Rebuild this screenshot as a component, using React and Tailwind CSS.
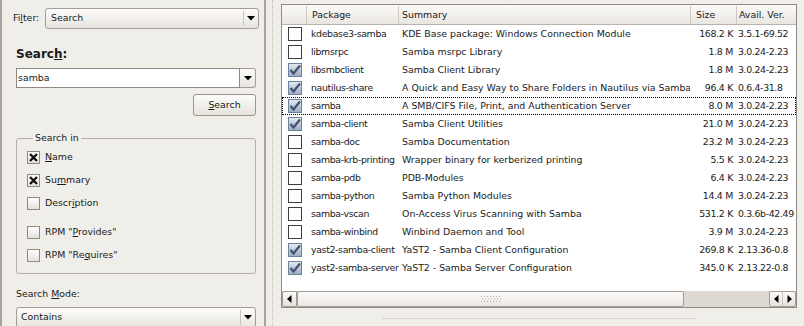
import React from "react";

const packages = [
  { name: "kdebase3-samba", summary: "KDE Base package: Windows Connection Module", size: "168.2 K", ver: "3.5.1-69.52", on: false },
  { name: "libmsrpc", summary: "Samba msrpc Library", size: "1.8 M", ver: "3.0.24-2.23", on: false },
  { name: "libsmbclient", summary: "Samba Client Library", size: "1.8 M", ver: "3.0.24-2.23", on: true },
  { name: "nautilus-share", summary: "A Quick and Easy Way to Share Folders in Nautilus via Samba", size: "96.4 K", ver: "0.6.4-31.8", on: true },
  { name: "samba", summary: "A SMB/CIFS File, Print, and Authentication Server", size: "8.0 M", ver: "3.0.24-2.23", on: true, focus: true },
  { name: "samba-client", summary: "Samba Client Utilities", size: "21.0 M", ver: "3.0.24-2.23", on: true },
  { name: "samba-doc", summary: "Samba Documentation", size: "23.2 M", ver: "3.0.24-2.23", on: false },
  { name: "samba-krb-printing", summary: "Wrapper binary for kerberized printing", size: "5.5 K", ver: "3.0.24-2.23", on: false },
  { name: "samba-pdb", summary: "PDB-Modules", size: "6.4 K", ver: "3.0.24-2.23", on: false },
  { name: "samba-python", summary: "Samba Python Modules", size: "14.4 M", ver: "3.0.24-2.23", on: false },
  { name: "samba-vscan", summary: "On-Access Virus Scanning with Samba", size: "531.2 K", ver: "0.3.6b-42.49", on: false },
  { name: "samba-winbind", summary: "Winbind Daemon and Tool", size: "3.9 M", ver: "3.0.24-2.23", on: false },
  { name: "yast2-samba-client", summary: "YaST2 - Samba Client Configuration", size: "269.8 K", ver: "2.13.36-0.8", on: true },
  { name: "yast2-samba-server", summary: "YaST2 - Samba Server Configuration", size: "345.0 K", ver: "2.13.22-0.8", on: true },
];

const DownArrow = () => (
  <svg width="8" height="5" viewBox="0 0 8 5">
    <polygon points="0,0 8,0 4,4.5" fill="#000" />
  </svg>
);

const LeftArrow = () => (
  <svg width="5" height="8" viewBox="0 0 5 8">
    <polygon points="4.5,0 4.5,8 0,4" fill="#000" />
  </svg>
);

const RightArrow = () => (
  <svg width="5" height="8" viewBox="0 0 5 8">
    <polygon points="0.5,0 0.5,8 5,4" fill="#000" />
  </svg>
);

const Combo = ({ text, pad = "pl-[5px]" }) => (
  <div className="h-[21px] flex border border-[#a29e97] rounded-[3px] bg-gradient-to-b from-[#fdfcfb] to-[#e8e5df]">
    <div className={`flex-1 flex items-center ${pad}`}>{text}</div>
    <div className="w-[15px] my-[2px] border-l border-[#c9c5be] flex items-center justify-center">
      <DownArrow />
    </div>
  </div>
);

const XBox = ({ checked }) => (
  <div className="w-[13px] h-[13px] border border-[#8e8a84] bg-gradient-to-b from-[#ffffff] to-[#e4e1dc] flex items-center justify-center">
    {checked && (
      <svg width="9" height="9" viewBox="0 0 9 9">
        <path d="M1 1 L8 8 M8 1 L1 8" stroke="#111" strokeWidth="2.3" />
      </svg>
    )}
  </div>
);

const CheckOption = ({ children, checked, extra = "" }) => (
  <div className={`h-[23px] flex items-center gap-[5px] ${extra}`}>
    <XBox checked={checked} />
    <span>{children}</span>
  </div>
);

const PkgBox = ({ on }) =>
  on ? (
    <svg width="14" height="14" viewBox="0 0 14 14">
      <defs>
        <linearGradient id="pk" x1="0" y1="0" x2="0" y2="1">
          <stop offset="0" stopColor="#e6ebf2" />
          <stop offset="1" stopColor="#9aabc2" />
        </linearGradient>
      </defs>
      <rect x="0.5" y="0.5" width="13" height="13" fill="url(#pk)" stroke="#6f819a" />
      <path d="M2.5 7 L5.5 10.5 L12 2.5" fill="none" stroke="#3f5170" strokeWidth="2.2" />
    </svg>
  ) : (
    <div className="w-[14px] h-[14px] border border-[#3d3d3d] bg-white" />
  );

const Grip = () => (
  <svg width="22" height="8" viewBox="0 0 22 8">
    {[0, 1, 2, 3, 4, 5, 6].map((i) =>
      [0, 1, 2].map((j) => (
        <rect key={`${i}-${j}`} x={1 + i * 3 + (j % 2)} y={1 + j * 2.5} width="1" height="1" fill="#b7b3ac" />
      ))
    )}
  </svg>
);

export default function App() {
  return (
    <div className="w-[804px] h-[326px] overflow-hidden flex bg-[#f0eee9] text-[#1a1a1a] text-[9.4px] font-['DejaVu_Sans',sans-serif]">
      {/* left: search panel */}
      <div className="w-[264px] shrink-0 border-l-2 border-[#a8a49d] pl-[11px] pr-[5px] flex flex-col">
        <div className="mt-[8px] h-[21px] flex items-center">
          <span className="w-[32px]">
            Fi<u>l</u>ter:
          </span>
          <div className="flex-1">
            <Combo text="Search" />
          </div>
        </div>

        <div className="ml-[3px] mr-[3px] flex flex-col">
          <div className="mt-[17px] h-[16px] leading-[16px] text-[12px] font-bold">
            Searc<u>h</u>:
          </div>
          <div className="mt-[6px] h-[20px] flex">
            <div className="flex-1 bg-white border border-[#8e8a83] flex items-center pl-[1px]">samba</div>
            <div className="w-[16px] border border-l-0 border-[#a29e97] rounded-r-[3px] bg-gradient-to-b from-[#fdfcfb] to-[#e8e5df] flex items-center justify-center">
              <DownArrow />
            </div>
          </div>
          <div className="mt-[6px] self-end w-[63px] h-[22px] border border-[#9a968f] rounded-[3px] bg-gradient-to-b from-[#fdfcfb] to-[#e6e3dd] flex items-center justify-center">
            <span>
              <u>S</u>earch
            </span>
          </div>

          <fieldset className="mt-[16px] border border-[#b3afa8] rounded-[3px] pl-[10px] pb-[6px]">
            <legend className="ml-[6px] px-[2px] leading-[12px]">Search in</legend>
            <div className="pt-[2px]">
              <CheckOption checked>
                <u>N</u>ame
              </CheckOption>
              <CheckOption checked>
                Su<u>m</u>mary
              </CheckOption>
              <CheckOption>
                Descr<u>i</u>ption
              </CheckOption>
              <CheckOption extra="mt-[6px]">
                RPM "<u>P</u>rovides"
              </CheckOption>
              <CheckOption>
                RPM "Re<u>q</u>uires"
              </CheckOption>
            </div>
          </fieldset>

          <div className="mt-[13px] h-[14px] leading-[14px]">
            Search <u>M</u>ode:
          </div>
          <div className="mt-[6px]">
            <Combo text="Contains" pad="pl-[4px]" />
          </div>
        </div>
      </div>

      {/* pane splitter */}
      <div className="w-[17px] shrink-0 flex">
        <div className="w-[2px] bg-[#a9a59e]" />
        <div className="ml-[6px] border-l border-dotted border-[#bdb9b2]" />
      </div>

      {/* right: package table */}
      <div className="flex-1 pt-[4px] pr-[7px] flex flex-col">
        <div className="h-[304px] border border-[#8f8b84] bg-white flex flex-col">
          <div className="h-[20px] shrink-0 pt-[1px] grid grid-cols-[24px_92px_292px_46px_1fr] border-b border-[#b8b4ad] bg-gradient-to-b from-[#fbfaf8] to-[#e9e6e0]">
            <div />
            <div className="border-l border-[#cfcbc4] pl-[5px] flex items-center">Package</div>
            <div className="border-l border-[#cfcbc4] pl-[3px] flex items-center">Summary</div>
            <div className="border-l border-[#cfcbc4] pl-[5px] flex items-center">Size</div>
            <div className="border-l border-[#cfcbc4] pl-[2px] flex items-center whitespace-nowrap overflow-hidden">Avail. Ver.</div>
          </div>

          {packages.map((p) => (
            <div
              key={p.name}
              className={`h-[18px] shrink-0 grid grid-cols-[24px_92px_292px_46px_1fr] items-center whitespace-nowrap ${
                p.focus ? "outline outline-1 outline-dotted outline-black -outline-offset-1" : ""
              }`}
            >
              <div className="pl-[6px] flex items-center">
                <PkgBox on={p.on} />
              </div>
              <div className="pl-[5px] tracking-[-0.35px] overflow-visible">{p.name}</div>
              <div className="pl-[4px] overflow-hidden">{p.summary}</div>
              <div className="pr-[3px] tracking-[-0.3px] text-right">{p.size}</div>
              <div className="pl-[2px] tracking-[-0.35px] overflow-hidden">{p.ver}</div>
            </div>
          ))}

          <div className="flex-1" />

          <div className="h-[16px] shrink-0 flex bg-[#dedad3]">
            <div className="w-[15px] border border-[#a29e97] rounded-l-[2px] bg-gradient-to-b from-[#fbfaf8] to-[#e6e3dd] flex items-center justify-center">
              <LeftArrow />
            </div>
            <div className="w-[387px] border border-[#a29e97] rounded-[2px] bg-gradient-to-b from-[#fbfaf8] to-[#ebe8e3] flex items-center justify-center">
              <Grip />
            </div>
            <div className="flex-1" />
            <div className="w-[27px] border border-[#a29e97] rounded-[2px] bg-gradient-to-b from-[#fbfaf8] to-[#e6e3dd] flex">
              <div className="flex-1 border-r border-[#c9c5be] flex items-center justify-center">
                <LeftArrow />
              </div>
              <div className="flex-1 flex items-center justify-center">
                <RightArrow />
              </div>
            </div>
          </div>
        </div>
        <div className="mt-[10px] mx-auto w-[312px] border-t border-dotted border-[#bdb9b2]" />
      </div>
    </div>
  );
}
